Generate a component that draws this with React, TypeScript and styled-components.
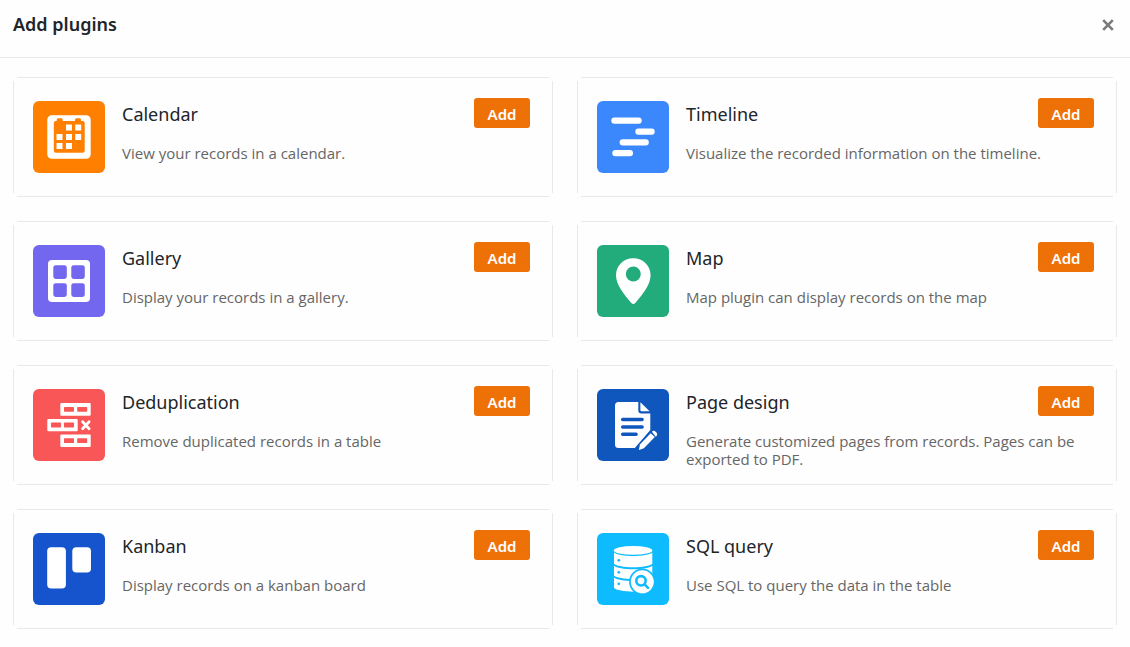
import React from "react";
import styled, { createGlobalStyle } from "styled-components";

const GlobalStyle = createGlobalStyle`
  *, *::before, *::after { box-sizing: border-box; }
  body {
    margin: 0;
    background: #fefefe;
    color: #212529;
    font-family: "Noto Sans", "Open Sans", sans-serif;
  }
`;

const Header = styled.header`
  display: flex;
  align-items: flex-start;
  justify-content: space-between;
  min-height: 58px;
  padding: 12px 13px 0;
  border-bottom: 1px solid #e9e9e9;
`;

const Heading = styled.h1`
  margin: 0;
  font-size: 18px;
  line-height: 24px;
  font-weight: 600;
`;

const CloseButton = styled.button`
  display: flex;
  padding: 7px 3px;
  border: 0;
  background: none;
  color: #7a7a7a;
  cursor: pointer;
`;

const PluginGrid = styled.ul`
  display: grid;
  grid-template-columns: repeat(2, minmax(0, 1fr));
  gap: 24px;
  margin: 0;
  padding: 19px 13px 18px;
  list-style: none;
`;

/* Hairline edges that stop short of the corners. */
const Card = styled.li`
  --line: linear-gradient(#e9e9e9, #e9e9e9);
  display: flex;
  gap: 17px;
  min-height: 120px;
  padding: 20px 23px 12px 20px;
  background-image: var(--line), var(--line), var(--line), var(--line);
  background-repeat: no-repeat;
  background-position: top, bottom, left, right;
  background-size: calc(100% - 8px) 1px, calc(100% - 8px) 1px, 1px calc(100% - 8px), 1px calc(100% - 8px);
`;

const IconTile = styled.svg<{ $color: string }>`
  flex: none;
  width: 72px;
  height: 72px;
  margin-top: 4px;
  border-radius: 6px;
  background: ${(p) => p.$color};
  color: ${(p) => p.$color};
`;

const CardBody = styled.div`
  flex: 1;
  min-width: 0;
`;

const CardHead = styled.div`
  display: flex;
  align-items: flex-start;
  justify-content: space-between;
  padding-top: 1px;
`;

const PluginName = styled.h2`
  margin: 0;
  font-size: 18px;
  line-height: 32px;
  font-weight: 400;
`;

const AddButton = styled.button`
  width: 56px;
  height: 30px;
  padding: 2px 0 0;
  border: 0;
  border-radius: 3px;
  background: #ee7108;
  color: #fff;
  font: 600 15px/20px "Noto Sans", "Open Sans", sans-serif;
  cursor: pointer;
`;

const Description = styled.p`
  margin: 14px 0 0;
  color: #666;
  font-family: "Open Sans", "Noto Sans", sans-serif;
  font-size: 15px;
  line-height: 18px;
`;

const CalendarArt = () => (
  <>
    <rect x="14.3" y="14.3" width="43.4" height="43.4" rx="4.5" fill="#fff" />
    <path d="M23.7 20v-1.2q0-1.5 1.5-1.5h3q1.5 0 1.5 1.5V20H42v-1.2q0-1.5 1.5-1.5h3q1.5 0 1.5 1.5V20h1.7q2 0 2 2v27.5q0 2.2-2.2 2.2H23q-2.2 0-2.2-2.2V22q0-2 2-2z" fill="currentColor" />
    <path d="M33 23.5h6v6h-6zM42.2 23.5h6v6h-6zM23.5 33h6v6h-6zM33 33h6v6h-6zM42.2 33h6v6h-6zM23.5 42h6v6h-6zM33 42h6v6h-6z" fill="#fff" />
  </>
);

const TimelineArt = () => (
  <g fill="#fff">
    <rect x="14.3" y="16.5" width="30.4" height="6.3" rx="3" />
    <rect x="38.3" y="27.4" width="19.4" height="6.3" rx="3" />
    <rect x="22.6" y="38.3" width="29.2" height="6.3" rx="3" />
    <rect x="15.3" y="49" width="20.7" height="6.3" rx="3" />
  </g>
);

const GalleryArt = () => (
  <>
    <rect x="15" y="15" width="42" height="42" rx="4" fill="#fff" />
    <g fill="currentColor">
      <rect x="20.3" y="20.2" width="13.5" height="13.7" rx="2.4" />
      <rect x="38.3" y="20.2" width="13.5" height="13.7" rx="2.4" />
      <rect x="20.3" y="38.2" width="13.5" height="13.7" rx="2.4" />
      <rect x="38.3" y="38.2" width="13.5" height="13.7" rx="2.4" />
    </g>
  </>
);

const MapArt = () => (
  <>
    <path d="M36.3 13.3c-9.8 0-17.3 7.4-17.3 16.9 0 9.6 8.2 19.4 15.3 27.7q2 2.2 4 0c7.1-8.3 15.3-18.1 15.3-27.7 0-9.5-7.5-16.9-17.3-16.9z" fill="#fff" />
    <circle cx="36.3" cy="29" r="7.5" fill="currentColor" />
  </>
);

const DeduplicationArt = () => (
  <>
    <g fill="#fff">
      <rect x="27.3" y="14" width="30.4" height="12.7" rx="1" />
      <rect x="14.3" y="30" width="30.4" height="12.2" rx="1" />
      <rect x="27.3" y="45.4" width="30.4" height="12.6" rx="1" />
    </g>
    <g fill="currentColor">
      <rect x="31" y="18" width="10" height="4.8" rx=".7" />
      <rect x="44.2" y="18" width="10" height="4.8" rx=".7" />
      <rect x="18" y="33.6" width="10" height="4.8" rx=".7" />
      <rect x="31" y="33.6" width="10" height="4.8" rx=".7" />
      <rect x="31" y="49.3" width="10" height="4.8" rx=".7" />
      <rect x="44.2" y="49.3" width="10" height="4.8" rx=".7" />
    </g>
    <path d="M49.6 32.8l6.5 7M56.1 32.8l-6.5 7" stroke="#fff" strokeWidth="2.8" strokeLinecap="round" />
  </>
);

const PageArt = () => (
  <>
    <path d="M21.5 13H41.3v8.3q0 3.2 3.2 3.2h8.8V41L37.8 59H21.5Q18 59 18 55.5v-39Q18 13 21.5 13z" fill="#fff" />
    <path d="M43.4 13.2L52.6 22.3H44.4q-1 0-1-1z" fill="#fff" />
    <path d="M25.7 30.5h19.4M25.7 38h19.4M25.7 45.2h13.4" stroke="currentColor" strokeWidth="3.5" strokeLinecap="round" />
    <path d="M41.9 61l1-5.4 10.8-11.4 4.1 3.8-10.9 11.3z" fill="#fff" />
    <path d="M54.9 42.8q1.8-1.8 3.7-.1l1 1q1.6 1.7-.8 4z" fill="#fff" />
  </>
);

const KanbanArt = () => (
  <g fill="#fff">
    <rect x="14.2" y="14.2" width="18.7" height="41.4" rx="4" />
    <rect x="39.3" y="14.2" width="18.7" height="25.4" rx="4" />
  </g>
);

const SqlArt = () => (
  <>
    <g fill="#fff">
      <ellipse cx="36.1" cy="17.4" rx="19.2" ry="4.4" />
      <path d="M17 19.6c4 4.6 34.3 4.6 38.3 0v11.2c-4 4.6-34.3 4.6-38.3 0z" />
      <path d="M17 32.8c4 4.6 34.3 4.6 38.3 0v9.8c-4 4.6-34.3 4.6-38.3 0z" />
      <path d="M17 44.6c4 4.6 34.3 4.6 38.3 0v10.2c-4 5.1-34.3 5.1-38.3 0z" />
    </g>
    <g fill="currentColor">
      <circle cx="21.8" cy="27.3" r="1.4" />
      <circle cx="21.8" cy="39.3" r="1.4" />
      <circle cx="21.8" cy="50.8" r="1.4" />
      <circle cx="45.3" cy="48.8" r="13.2" />
    </g>
    <circle cx="45.3" cy="48.8" r="11.5" fill="#fff" />
    <g fill="none" stroke="currentColor" strokeWidth="2.6" strokeLinecap="round">
      <circle cx="44" cy="47.8" r="4.7" />
      <path d="M47.6 51.4l3.4 3.4" />
    </g>
  </>
);

interface Plugin {
  name: string;
  description: string;
  color: string;
  Art: React.ComponentType;
}

const plugins: Plugin[] = [
  { name: "Calendar", description: "View your records in a calendar.", color: "#ff8000", Art: CalendarArt },
  { name: "Timeline", description: "Visualize the recorded information on the timeline.", color: "#3b88fd", Art: TimelineArt },
  { name: "Gallery", description: "Display your records in a gallery.", color: "#7367f0", Art: GalleryArt },
  { name: "Map", description: "Map plugin can display records on the map", color: "#22ac7c", Art: MapArt },
  { name: "Deduplication", description: "Remove duplicated records in a table", color: "#f95757", Art: DeduplicationArt },
  { name: "Page design", description: "Generate customized pages from records. Pages can be exported to PDF.", color: "#1057bd", Art: PageArt },
  { name: "Kanban", description: "Display records on a kanban board", color: "#1554cc", Art: KanbanArt },
  { name: "SQL query", description: "Use SQL to query the data in the table", color: "#0fbbff", Art: SqlArt },
];

export default function App() {
  return (
    <>
      <GlobalStyle />
      <Header>
        <Heading>Add plugins</Heading>
        <CloseButton aria-label="Close">
          <svg width="12" height="12" viewBox="0 0 12 12" aria-hidden="true">
            <path d="M1.2 1.2l9.6 9.6M10.8 1.2l-9.6 9.6" stroke="currentColor" strokeWidth="2.6" />
          </svg>
        </CloseButton>
      </Header>
      <main>
        <PluginGrid>
          {plugins.map(({ name, description, color, Art }) => (
            <Card key={name}>
              <IconTile $color={color} viewBox="0 0 72 72" aria-hidden="true">
                <Art />
              </IconTile>
              <CardBody>
                <CardHead>
                  <PluginName>{name}</PluginName>
                  <AddButton aria-label={`Add ${name}`}>Add</AddButton>
                </CardHead>
                <Description>{description}</Description>
              </CardBody>
            </Card>
          ))}
        </PluginGrid>
      </main>
    </>
  );
}
